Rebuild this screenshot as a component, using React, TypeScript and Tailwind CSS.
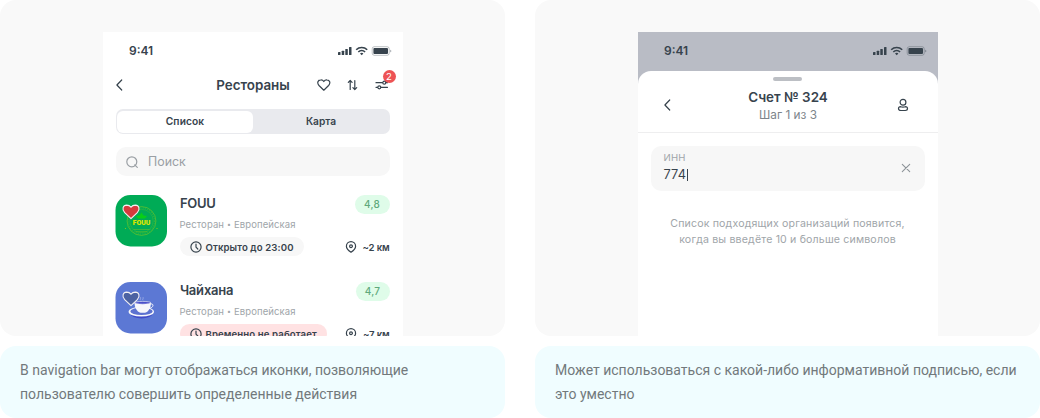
import React from "react";

function StatusBar() {
  return (
    <div className="flex h-9 shrink-0 items-center justify-between pt-px pr-[11px] pl-[26.5px] text-[#37434d]">
      <span className="text-[12px] leading-4 font-semibold">9:41</span>
      <svg width="54" height="12" viewBox="0 0 54 12" fill="none">
        <g fill="currentColor">
          <rect x="0" y="7" width="2.5" height="3" rx="0.6" />
          <rect x="3.7" y="5.7" width="2.5" height="4.3" rx="0.6" />
          <rect x="7.3" y="4" width="2.5" height="6" rx="0.6" />
          <rect x="11" y="2" width="2.5" height="8" rx="0.6" />
        </g>
        <g stroke="currentColor" strokeWidth="1.6">
          <path d="M18.2 4.7a7.9 7.9 0 0 1 11 0" />
          <path d="M20.3 7a4.9 4.9 0 0 1 6.8 0" />
        </g>
        <path d="M22 8.5a2.5 2.5 0 0 1 3.4 0L23.7 10.2z" fill="currentColor" />
        <rect x="34.2" y="1.7" width="17" height="8.6" rx="2.1" stroke="currentColor" strokeOpacity="0.4" strokeWidth="0.8" />
        <rect x="35.4" y="2.9" width="14.6" height="6.2" rx="1" fill="currentColor" />
        <path d="M52.2 4.7v2.7c.8-.3 1.1-.8 1.1-1.35s-.3-1.05-1.1-1.35z" fill="currentColor" fillOpacity="0.45" />
      </svg>
    </div>
  );
}

function BackIcon() {
  return (
    <svg width="8" height="12" viewBox="0 0 8 12" fill="none" stroke="#37434d" strokeWidth="1.2" strokeLinecap="round" strokeLinejoin="round">
      <path d="M5.7 1 .9 6l4.8 5" />
    </svg>
  );
}

function HeartIcon() {
  return (
    <svg width="14" height="12" viewBox="0 0 14 12" fill="none" stroke="#37434d" strokeWidth="1.2" strokeLinejoin="round">
      <path d="M6.8 11.2 2 6.5C-.3 4 .9 1 3.7.9 5.1.8 6.2 1.4 6.8 2.5 7.5 1.4 8.6.8 10 .9c2.7.1 3.9 3.1 1.6 5.6z" />
    </svg>
  );
}

function SortIcon() {
  return (
    <svg width="12" height="12" viewBox="0 0 12 12" fill="none" stroke="#37434d" strokeWidth="1.2" strokeLinecap="round" strokeLinejoin="round">
      <path d="M3.2 10.5V1.5M1.3 3.4l1.9-1.9 1.9 1.9M7.8 1.500v9M5.900 8.600l1.900 1.900 1.900-1.900" />
    </svg>
  );
}

function FilterIcon() {
  return (
    <svg width="14" height="12" viewBox="0 0 14 12" fill="none" stroke="#37434d" strokeWidth="1.2" strokeLinecap="round">
      <path d="M1 3.700h6.500M11 3.700h1.500M1 8.300h1.500M6 8.300h6.500" />
      <circle cx="9.300" cy="3.700" r="1.500" />
      <circle cx="4.300" cy="8.300" r="1.500" />
    </svg>
  );
}

function ClockIcon() {
  return (
    <svg width="12" height="12" viewBox="0 0 12 12" fill="none" stroke="#37434d" strokeWidth="1.2" strokeLinecap="round" strokeLinejoin="round">
      <circle cx="6" cy="6" r="5.1" />
      <path d="M6 3v3.200l1.800 1.800" />
    </svg>
  );
}

function PinIcon() {
  return (
    <svg width="12" height="12" viewBox="0 0 12 12" fill="none" stroke="#37434d" strokeWidth="1.2" strokeLinejoin="round">
      <path d="M6 11.200C3.900 9.800 1.400 7.600 1.400 5.200a4.600 4.600 0 0 1 9.200 0c0 2.400-2.500 4.600-4.600 6z" />
      <circle cx="6" cy="5.200" r="1.400" />
    </svg>
  );
}

function FavoriteMark({ fill }: { fill: string }) {
  return (
    <path
      d="M16 23.700 9.700 17.700C6.500 14.300 8 10.200 11.600 10.100c1.900 0 3.400.7 4.400 2.200 1-1.500 2.500-2.200 4.400-2.200 3.600.1 5.100 4.200 1.900 7.600z"
      fill={fill}
      stroke="#f4f1f4"
      strokeWidth="1.1"
      strokeLinejoin="round"
    />
  );
}

function FouuLogo() {
  return (
    <svg width="52" height="52" viewBox="0 0 52 52" className="shrink-0">
      <rect x="0.5" width="51.5" height="51.5" rx="15" fill="#00ab56" />
      <g fill="none" stroke="#8fcb18">
        <circle cx="26.5" cy="26" r="14.4" strokeWidth="0.7" strokeOpacity="0.75" />
        <circle cx="26.5" cy="26" r="11.7" strokeWidth="0.5" strokeOpacity="0.45" />
        <circle cx="26.5" cy="26" r="13" strokeWidth="1.2" strokeDasharray="1 1.3" strokeOpacity="0.3" />
        <path d="M18.500 34.500h16M20.500 36.700h12" strokeWidth="0.7" strokeOpacity="0.6" />
      </g>
      <path d="M26.500 17.500l2 3 3.500.5-2 2.500h-7l-2-2.500 3.500-.5z" fill="#08ce18" />
      <circle cx="10.5" cy="33.5" r="0.6" fill="#8fcb18" />
      <circle cx="42" cy="33.5" r="0.6" fill="#8fcb18" />
      <text x="26.5" y="29.500" textAnchor="middle" textLength="17.5" lengthAdjust="spacingAndGlyphs" fontFamily="Inter, sans-serif" fontSize="5.8" fontWeight="900" fill="#d8e500">
        FOUU
      </text>
      <FavoriteMark fill="#d53b3d" />
    </svg>
  );
}

function TeaLogo() {
  return (
    <svg width="52" height="52" viewBox="0 0 52 52" className="shrink-0">
      <rect x="0.5" width="51.5" height="51.5" rx="15" fill="#5c78d4" />
      <ellipse cx="26.5" cy="31.8" rx="11" ry="4.6" fill="#3f4bc7" />
      <ellipse cx="26.3" cy="29.7" rx="12.700" ry="4.900" fill="#f6f7fb" />
      <ellipse cx="26.5" cy="29.3" rx="11.200" ry="3.700" fill="#5c72d0" />
      <path d="M19.500 20.500h16.500c0 5-2.200 9.200-6 10.200h-4.500c-3.800-1-6-5.200-6-10.200z" fill="#f6f7fb" />
      <ellipse cx="27.7" cy="20.8" rx="8.2" ry="1.4" fill="#4a4fc9" stroke="#f6f7fb" strokeWidth="0.6" />
      <path d="M35.500 22c3.500-1 3.500 4-1.700 4.500" fill="none" stroke="#f6f7fb" strokeWidth="1" />
      <path d="M25.500 18.200c-1-1.300 1-1.700 0-3M28 18.200c-1-1.300 1-1.700 0-3" fill="none" stroke="#aab8ea" strokeWidth="0.7" />
      <FavoriteMark fill="#4c62a2" />
    </svg>
  );
}

type Place = {
  name: string;
  nameClass: string;
  rating: string;
  ratingClass: string;
  status: string;
  statusClass: string;
  distance: string;
  logo: React.ReactNode;
};

const places: Place[] = [
  {
    name: "FOUU",
    nameClass: "tracking-[-0.3px]",
    rating: "4,8",
    ratingClass: "w-[35px]",
    status: "Открыто до 23:00",
    statusClass: "w-[124px] bg-[#f7f7f7]",
    distance: "~2 км",
    logo: <FouuLogo />,
  },
  {
    name: "Чайхана",
    nameClass: "tracking-[-0.2px]",
    rating: "4,7",
    ratingClass: "w-[34px]",
    status: "Временно не работает",
    statusClass: "w-[147px] bg-[#ffe2e3]",
    distance: "~7 км",
    logo: <TeaLogo />,
  },
];

function PlaceRow({ place }: { place: Place }) {
  return (
    <div className="flex h-[87px] shrink-0 pr-[13px] pl-3">
      {place.logo}
      <div className="ml-[13px] flex flex-1 flex-col">
        <div className="flex h-[22px] items-start justify-between">
          <span className={`pl-[0.4px] text-[13px] leading-[17px] font-semibold text-[#37434d] ${place.nameClass}`}>{place.name}</span>
          <span className={`flex h-[19px] items-center justify-center rounded-full bg-[#dffce9] text-[10px] font-medium tracking-[0.2px] text-[#5fa97c] ${place.ratingClass}`}>
            {place.rating}
          </span>
        </div>
        <span className="mt-px flex items-center gap-[3px] text-[9.5px] leading-[14px] tracking-[0.09px] text-[#a0a5a9]">
          <span>Ресторан</span>
          <span className="text-[7px]">•</span>
          <span>Европейская</span>
        </span>
        <div className="mt-[5px] flex items-center justify-between text-[9.6px] leading-[15px] font-semibold tracking-[0.11px] text-[#37434d]">
          <span className={`flex h-[19px] items-center gap-1 rounded-full pl-[10px] whitespace-nowrap ${place.statusClass}`}>
            <ClockIcon />
            <span className="pt-px">{place.status}</span>
          </span>
          <span className="flex items-center gap-[5.5px] whitespace-nowrap">
            <PinIcon />
            <span className="pt-px tracking-[-0.15px]">{place.distance}</span>
          </span>
        </div>
      </div>
    </div>
  );
}

function RestaurantsScreen() {
  return (
    <div className="flex h-[304px] w-[300px] flex-col overflow-hidden bg-white">
      <StatusBar />
      <div className="grid h-[34px] shrink-0 grid-cols-[1fr_auto_1fr] items-center">
        <div className="pl-[13px]">
          <BackIcon />
        </div>
        <h2 className="pl-[1px] text-[13.4px] leading-5 font-semibold text-[#37434d]">Рестораны</h2>
        <div className="flex items-center justify-end gap-4 pr-[14px]">
          <HeartIcon />
          <SortIcon />
          <div className="relative">
            <FilterIcon />
            <span className="absolute -top-[9px] left-[8px] flex h-[13px] w-[13px] items-center justify-center rounded-full bg-[#ed5355] text-[9.6px] leading-none text-white">
              2
            </span>
          </div>
        </div>
      </div>
      <div className="mx-[13px] mt-[7px] flex h-[25px] shrink-0 rounded-[7px] bg-[#e9eaee] p-[1.5px] text-[10.2px] font-semibold text-[#37434d]">
        <div className="flex w-[136px] items-center justify-center rounded-[6px] bg-white tracking-[0.1px]">Список</div>
        <div className="flex flex-1 items-center justify-center pl-px">Карта</div>
      </div>
      <div className="mx-[13px] mt-[13px] mb-[19px] flex h-[29px] shrink-0 items-center gap-[10px] rounded-[10px] bg-[#f7f7f7] pl-[10px] text-[12.4px] text-[#9a9fa4]">
        <svg width="12" height="12" viewBox="0 0 12 12" fill="none" stroke="currentColor" strokeWidth="1.2" strokeLinecap="round">
          <circle cx="5.8" cy="5.8" r="5" />
          <path d="m8.700 8.900 2.600 2.500" />
        </svg>
        <span className="pt-px pl-[0.5px]">Поиск</span>
      </div>
      {places.map((place) => (
        <PlaceRow key={place.name} place={place} />
      ))}
    </div>
  );
}

function InvoiceScreen() {
  return (
    <div className="flex h-[304px] w-[300px] flex-col overflow-hidden bg-[#b9bcc5]">
      <StatusBar />
      <div className="mt-[2.5px] flex flex-1 flex-col rounded-t-[13px] bg-white">
        <div className="mx-auto mt-[6.5px] h-1 w-[29px] shrink-0 rounded-full bg-[#bcbfc4]" />
        <div className="grid h-[52px] shrink-0 grid-cols-[1fr_auto_1fr] items-center border-b border-[#eeeeef]">
          <div className="pb-1 pl-[26px]">
            <BackIcon />
          </div>
          <div className="flex flex-col items-center pb-[2px]">
            <h2 className="pl-[1px] text-[13.4px] leading-[18px] font-semibold text-[#37434d]">Счет № 324</h2>
            <p className="pl-[1px] text-[11.8px] leading-[18px] text-[#7d858b]">Шаг 1 из 3</p>
          </div>
          <div className="flex justify-end pr-[29px] pb-1">
            <svg width="12" height="14" viewBox="0 0 12 14" fill="none" stroke="#37434d" strokeWidth="1.2">
              <circle cx="6" cy="4.2" r="2.9" />
              <path d="M1.500 10.600c0-1.300 1-1.900 2.200-1.900 1.500.5 3.100.5 4.600 0 1.200 0 2.200.6 2.200 1.900 0 1.400-1 1.900-2.200 1.900H3.700c-1.200 0-2.200-.5-2.200-1.900z" />
            </svg>
          </div>
        </div>
        <div className="mx-[13px] mt-[13px] flex h-[45px] shrink-0 items-center justify-between rounded-[10px] bg-[#f7f7f7] pr-[14px] pl-[13px]">
          <div className="flex flex-col pb-[3px]">
            <span className="text-[9.6px] leading-[15px] tracking-[0.2px] text-[#a0a5a9]">ИНН</span>
            <span className="flex items-center text-[12.8px] leading-[19px] tracking-[0.1px] text-[#37434d]">
              774
              <span className="ml-[0.5px] h-[12px] w-px bg-[#37434d]" />
            </span>
          </div>
          <svg width="10" height="10" viewBox="0 0 10 10" stroke="#8d9398" strokeWidth="1.1" strokeLinecap="round" className="mb-px">
            <path d="m1.300 1.300 7.400 7.400m0-7.400L1.300 8.700" />
          </svg>
        </div>
        <p className="mt-[25px] text-center text-[10.6px] leading-4 tracking-[0.16px] text-[#a0a5a9]">
          Список подходящих организаций появится,
          <br />
          когда вы введёте 10 и больше символов
        </p>
      </div>
    </div>
  );
}

function Example({ caption, children }: { caption: string; children: React.ReactNode }) {
  return (
    <section className="flex w-[505px] flex-col gap-[10px]">
      <div className="flex h-[336px] justify-center overflow-hidden rounded-2xl bg-[#f9f9f9] pt-8">{children}</div>
      <p className="h-[72px] rounded-2xl bg-[#f0fdff] py-3 pr-4 pl-5 font-[Roboto,sans-serif] text-[14px] leading-6 text-[#72797c]">{caption}</p>
    </section>
  );
}

export default function App() {
  return (
    <main className="flex h-[418px] w-[1040px] gap-[30px] overflow-hidden bg-white font-[Inter,sans-serif]">
      <Example caption="В navigation bar могут отображаться иконки, позволяющие пользователю совершить определенные действия">
        <RestaurantsScreen />
      </Example>
      <Example caption="Может использоваться с какой-либо информативной подписью, если это уместно">
        <InvoiceScreen />
      </Example>
    </main>
  );
}
